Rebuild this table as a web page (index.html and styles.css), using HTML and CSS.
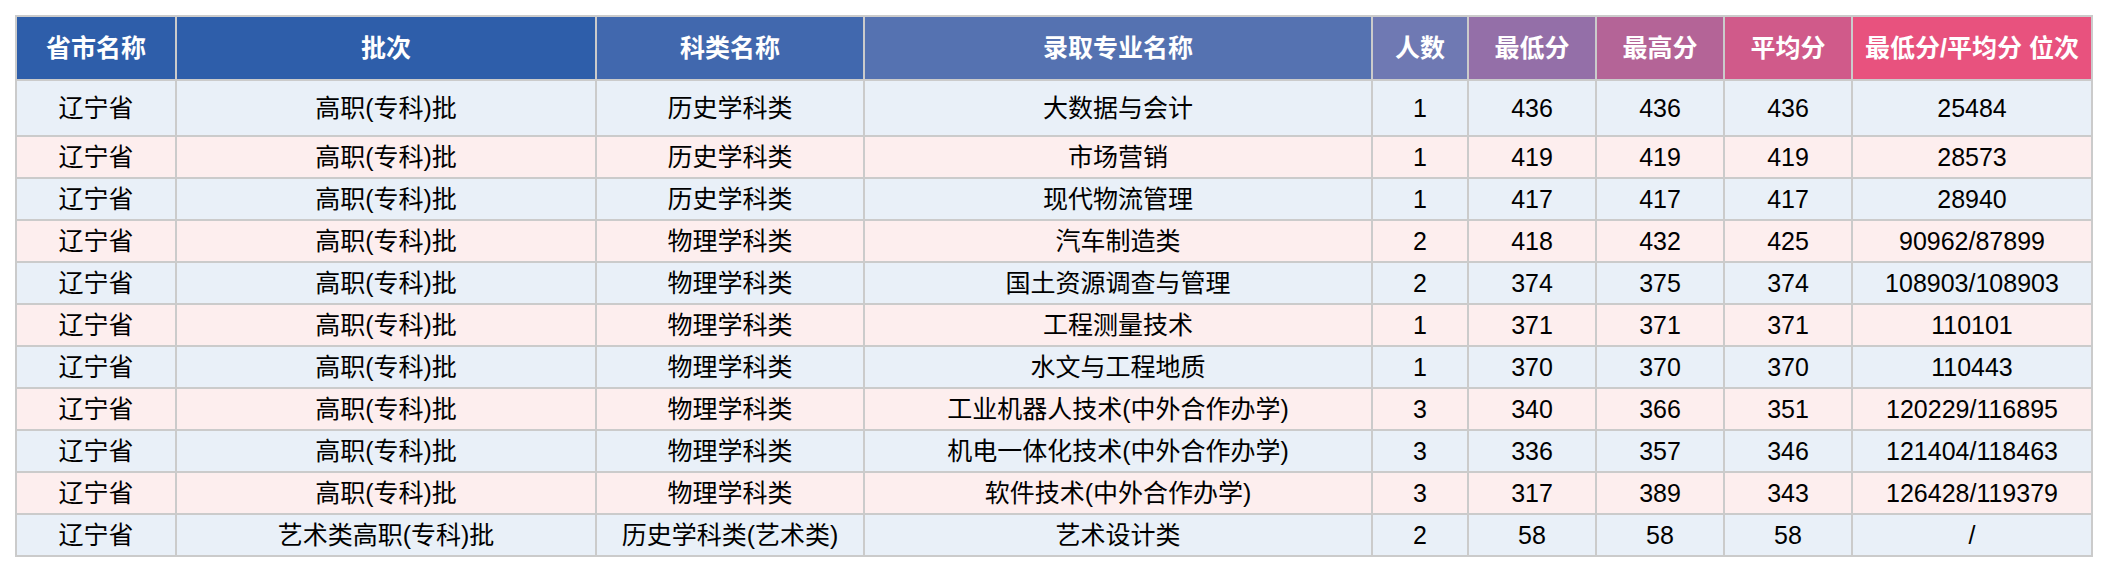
FILE: index.html
```html
<!DOCTYPE html>
<html lang="zh-CN">
<head>
<meta charset="utf-8">
<title>录取分数</title>
<link rel="stylesheet" href="styles.css">
</head>
<body>
<table class="score-table">
  <colgroup>
    <col class="c-prov"><col class="c-batch"><col class="c-subj"><col class="c-major"><col class="c-num"><col class="c-min"><col class="c-max"><col class="c-avg"><col class="c-rank">
  </colgroup>
  <thead>
    <tr>
      <th class="h1">省市名称</th>
      <th class="h2">批次</th>
      <th class="h3">科类名称</th>
      <th class="h4">录取专业名称</th>
      <th class="h5">人数</th>
      <th class="h6">最低分</th>
      <th class="h7">最高分</th>
      <th class="h8">平均分</th>
      <th class="h9">最低分/平均分 位次</th>
    </tr>
  </thead>
  <tbody>
    <tr class="odd first"><td>辽宁省</td><td>高职(专科)批</td><td>历史学科类</td><td>大数据与会计</td><td>1</td><td>436</td><td>436</td><td>436</td><td>25484</td></tr>
    <tr class="even"><td>辽宁省</td><td>高职(专科)批</td><td>历史学科类</td><td>市场营销</td><td>1</td><td>419</td><td>419</td><td>419</td><td>28573</td></tr>
    <tr class="odd"><td>辽宁省</td><td>高职(专科)批</td><td>历史学科类</td><td>现代物流管理</td><td>1</td><td>417</td><td>417</td><td>417</td><td>28940</td></tr>
    <tr class="even"><td>辽宁省</td><td>高职(专科)批</td><td>物理学科类</td><td>汽车制造类</td><td>2</td><td>418</td><td>432</td><td>425</td><td>90962/87899</td></tr>
    <tr class="odd"><td>辽宁省</td><td>高职(专科)批</td><td>物理学科类</td><td>国土资源调查与管理</td><td>2</td><td>374</td><td>375</td><td>374</td><td>108903/108903</td></tr>
    <tr class="even"><td>辽宁省</td><td>高职(专科)批</td><td>物理学科类</td><td>工程测量技术</td><td>1</td><td>371</td><td>371</td><td>371</td><td>110101</td></tr>
    <tr class="odd"><td>辽宁省</td><td>高职(专科)批</td><td>物理学科类</td><td>水文与工程地质</td><td>1</td><td>370</td><td>370</td><td>370</td><td>110443</td></tr>
    <tr class="even"><td>辽宁省</td><td>高职(专科)批</td><td>物理学科类</td><td>工业机器人技术(中外合作办学)</td><td>3</td><td>340</td><td>366</td><td>351</td><td>120229/116895</td></tr>
    <tr class="odd"><td>辽宁省</td><td>高职(专科)批</td><td>物理学科类</td><td>机电一体化技术(中外合作办学)</td><td>3</td><td>336</td><td>357</td><td>346</td><td>121404/118463</td></tr>
    <tr class="even"><td>辽宁省</td><td>高职(专科)批</td><td>物理学科类</td><td>软件技术(中外合作办学)</td><td>3</td><td>317</td><td>389</td><td>343</td><td>126428/119379</td></tr>
    <tr class="odd"><td>辽宁省</td><td>艺术类高职(专科)批</td><td>历史学科类(艺术类)</td><td>艺术设计类</td><td>2</td><td>58</td><td>58</td><td>58</td><td>/</td></tr>
  </tbody>
</table>
</body>
</html>
```

FILE: styles.css
```css
html, body {
  margin: 0;
  padding: 0;
  background: #ffffff;
}

body {
  padding: 15px 0 0 15px;
  font-family: "Liberation Sans", "Noto Sans CJK SC", sans-serif;
}

.score-table {
  table-layout: fixed;
  width: 2078px;
  border-collapse: separate;
  border-spacing: 0;
  border-top: 2px solid #cbcbcb;
  border-left: 2px solid #cbcbcb;
  font-size: 25px;
  color: #000;
}

.c-prov { width: 160px; }
.c-batch { width: 420px; }
.c-subj { width: 268px; }
.c-major { width: 508px; }
.c-num { width: 96px; }
.c-min { width: 128px; }
.c-max { width: 128px; }
.c-avg { width: 128px; }
.c-rank { width: 240px; }

.score-table th,
.score-table td {
  box-sizing: border-box;
  border-right: 2px solid #cbcbcb;
  border-bottom: 2px solid #cbcbcb;
  padding: 0 2px;
  text-align: center;
  vertical-align: middle;
  white-space: nowrap;
  line-height: 1;
}

.score-table th {
  height: 64px;
  color: #ffffff;
  font-weight: 700;
}

.score-table td {
  height: 42px;
  font-weight: 400;
}

.score-table tr.first td {
  height: 56px;
}

.h1 { background: #2e5eaa; }
.h2 { background: #2e5eaa; }
.h3 { background: #4168ae; }
.h4 { background: #5572b1; }
.h5 { background: #6f79b3; }
.h6 { background: #946fa8; }
.h7 { background: #b46497; }
.h8 { background: #d05a8a; }
.h9 { background: #e8527e; }

tr.odd td { background: #e9f0f8; }
tr.even td { background: #fdeeee; }
```
